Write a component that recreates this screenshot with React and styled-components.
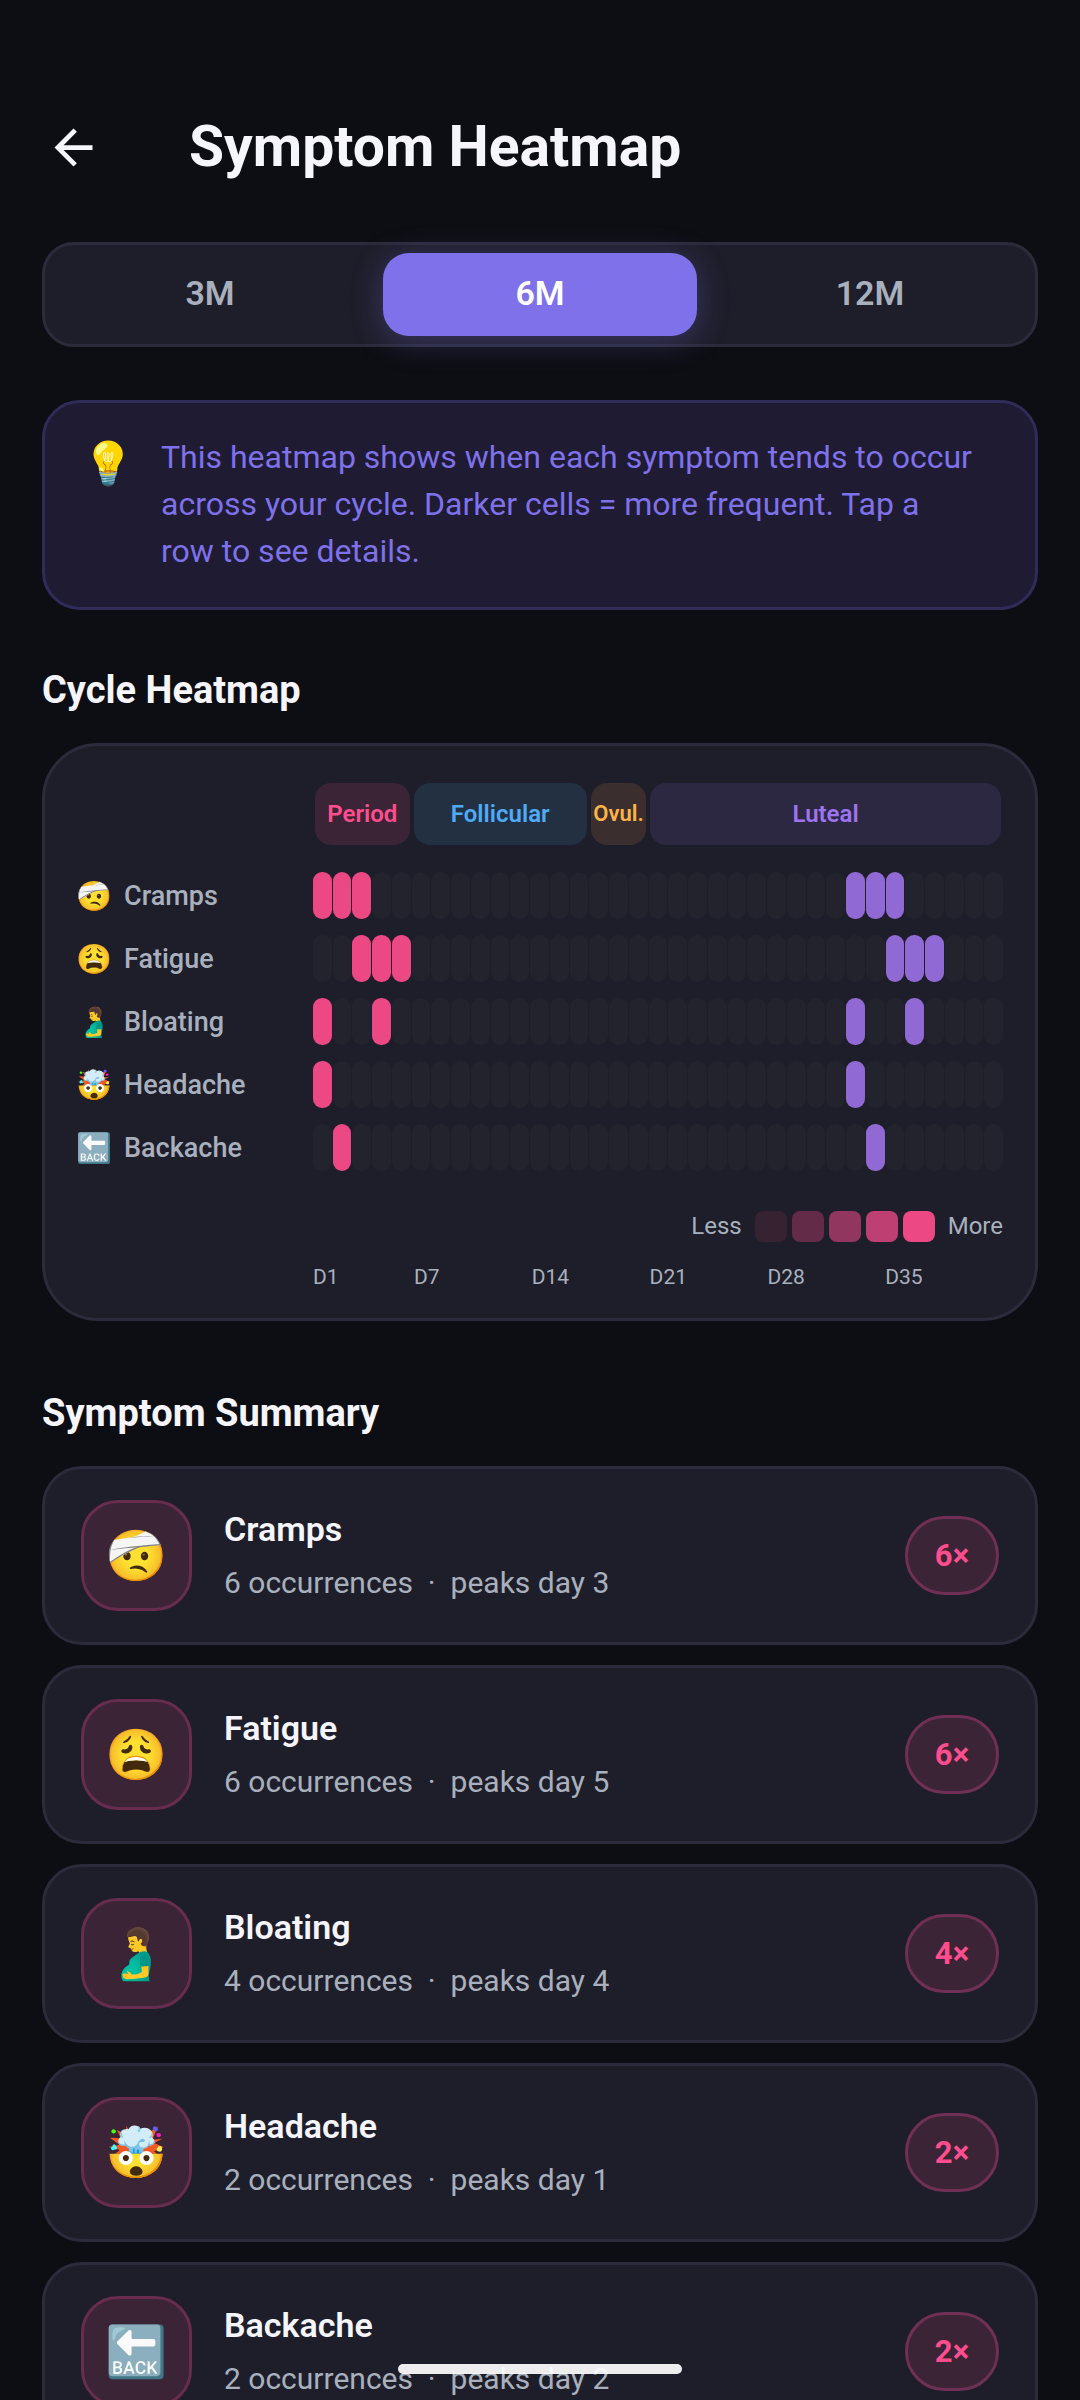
import React, { useState } from 'react';
import styled, { createGlobalStyle } from 'styled-components';

const COLORS = {
  background: '#0d0e13',
  surface: '#1e1e2a',
  outline: '#2b2b3b',
  text: '#f6f5fb',
  muted: '#a9b0bd',
  accent: '#7f71ea',
  period: '#ff4d8d',
  follicular: '#4dabf7',
  ovulation: '#ffb347',
  luteal: '#9d74f0',
};

const CYCLE_DAYS = 35;
const RANGES = ['3M', '6M', '12M'];

const PHASES = [
  { name: 'Period', days: 5, color: COLORS.period, fill: '#3a2436' },
  { name: 'Follicular', days: 9, color: COLORS.follicular, fill: '#233042' },
  {
    name: 'Ovul.',
    days: 3,
    color: COLORS.ovulation,
    fill: '#3a2f2e',
    compact: true,
  },
  { name: 'Luteal', days: 18, color: COLORS.luteal, fill: '#2d2842' },
];

const AXIS = [
  { label: 'D1', span: 6 },
  { label: 'D7', span: 7 },
  { label: 'D14', span: 7 },
  { label: 'D21', span: 7 },
  { label: 'D28', span: 7 },
  { label: 'D35', span: 7 },
];

const LEGEND = ['#362231', '#642b48', '#91365f', '#be3f72', '#ec4883'];

const SYMPTOMS = [
  { name: 'Cramps', emoji: '🤕', days: [1, 2, 3, 28, 29, 30], peak: 3 },
  { name: 'Fatigue', emoji: '😩', days: [3, 4, 5, 30, 31, 32], peak: 5 },
  { name: 'Bloating', emoji: '🫃', days: [1, 4, 28, 31], peak: 4 },
  { name: 'Headache', emoji: '🤯', days: [1, 28], peak: 1 },
  { name: 'Backache', emoji: '🔙', days: [2, 29], peak: 2 },
];

const GlobalStyle = createGlobalStyle`
  * {
    box-sizing: border-box;
  }
  body {
    margin: 0;
    background: ${COLORS.background};
    color: ${COLORS.text};
    font-family: Roboto, 'Noto Color Emoji', sans-serif;
  }
  button {
    font-family: inherit;
    border: 0;
    padding: 0;
    background: none;
    color: inherit;
    text-align: left;
    cursor: pointer;
  }
`;

const Screen = styled.main`
  height: 100vh;
  overflow-y: auto;
  scrollbar-width: none;
  padding: 95px 42px 0;
`;

const Header = styled.header`
  display: flex;
  align-items: center;
  gap: 84px;
  height: 105px;
`;

const BackButton = styled.button`
  display: flex;
  align-items: center;
  justify-content: center;
  width: 63px;
  height: 63px;
`;

const Title = styled.h1`
  margin: 0;
  padding-bottom: 2px;
  font-size: 57px;
  line-height: 70px;
  font-weight: 700;
`;

const Tabs = styled.div`
  display: grid;
  grid-template-columns: repeat(3, 1fr);
  gap: 16px;
  height: 105px;
  margin-top: 42px;
  padding: 8px;
  border: 3px solid ${COLORS.outline};
  border-radius: 32px;
  background: ${COLORS.surface};
`;

const Tab = styled.button`
  padding-bottom: 3px;
  border-radius: 26px;
  font-size: 34px;
  line-height: 40px;
  font-weight: 600;
  text-align: center;
  color: ${({ $active }) => ($active ? '#ffffff' : COLORS.muted)};
  background: ${({ $active }) => ($active ? COLORS.accent : 'transparent')};
  box-shadow: ${({ $active }) =>
    $active ? '0 5px 32px rgba(127, 113, 234, 0.3)' : 'none'};
`;

const Hint = styled.aside`
  display: flex;
  gap: 32px;
  margin-top: 53px;
  padding: 31px 37px 32px;
  border: 3px solid #312b5a;
  border-radius: 38px;
  background: #1e1b32;
  p {
    flex: 1;
    margin: 0;
    font-size: 32px;
    line-height: 47px;
    color: ${COLORS.accent};
  }
`;

const HintIcon = styled.span`
  width: 47px;
  font-size: 42px;
  line-height: 60px;
  text-align: center;
`;

const SectionTitle = styled.h2`
  margin: ${({ $top }) => $top}px 0 30px;
  font-size: 38px;
  line-height: 46px;
  font-weight: 700;
`;

const HeatmapCard = styled.section`
  padding: 37px 32px 28px;
  border: 3px solid ${COLORS.outline};
  border-radius: 56px;
  background: ${COLORS.surface};
`;

const PhaseBar = styled.div`
  display: grid;
  grid-template-columns: ${PHASES.map(({ days }) => `${days}fr`).join(' ')};
  margin: 0 0 27px 236px;
`;

const Phase = styled.div`
  display: flex;
  justify-content: center;
  min-width: 0;
  margin: 0 2px;
  border-radius: 16px;
  font-size: ${({ $compact }) => ($compact ? 22 : 24)}px;
  line-height: 62px;
  font-weight: 600;
  white-space: nowrap;
  color: ${({ $color }) => $color};
  background: ${({ $fill }) => $fill};
`;

const HeatRows = styled.div`
  display: grid;
  gap: 16px;
`;

const HeatRow = styled.button`
  display: grid;
  grid-template-columns: 236px 1fr;
  align-items: center;
  height: 47px;
`;

const RowLabel = styled.span`
  display: flex;
  align-items: center;
  gap: 13px;
  font-size: 27px;
  line-height: 32px;
  font-weight: 500;
  color: ${COLORS.muted};
`;

const RowEmoji = styled.span`
  display: flex;
  justify-content: center;
  width: 34px;
  font-size: 29px;
`;

const Cells = styled.span`
  display: grid;
  grid-template-columns: repeat(${CYCLE_DAYS}, 1fr);
  gap: 1px;
  height: 100%;
`;

const Cell = styled.span`
  border-radius: 9px;
  background: ${({ $color }) => $color};
`;

const Legend = styled.div`
  display: flex;
  justify-content: flex-end;
  align-items: center;
  gap: 5px;
  margin-top: 40px;
  font-size: 24px;
  line-height: 31px;
  color: ${COLORS.muted};
`;

const LegendText = styled.span`
  margin: ${({ $end }) => ($end ? '0 0 0 8px' : '0 8px 0 0')};
`;

const Swatch = styled.span`
  width: 32px;
  height: 31px;
  border-radius: 8px;
  background: ${({ $color }) => $color};
`;

const Axis = styled.div`
  display: flex;
  margin: 23px 0 0 236px;
  font-size: 21px;
  line-height: 25px;
  color: ${COLORS.muted};
`;

const AxisLabel = styled.span`
  flex: ${({ $span }) => $span} 1 0;
`;

const SummaryList = styled.ul`
  display: grid;
  gap: 20px;
  margin: 0;
  padding: 0 0 80px;
  list-style: none;
`;

const SummaryCard = styled.li`
  display: flex;
  align-items: center;
  gap: 32px;
  padding: 31px 36px;
  border: 3px solid ${COLORS.outline};
  border-radius: 40px;
  background: ${COLORS.surface};
`;

const SummaryIcon = styled.span`
  display: flex;
  align-items: center;
  justify-content: center;
  width: 111px;
  height: 111px;
  border: 3px solid #682c4e;
  border-radius: 37px;
  background: #3a2436;
  font-size: 50px;
  line-height: 56px;
`;

const SummaryText = styled.div`
  flex: 1;
  h3 {
    margin: 0 0 15px;
    font-size: 34px;
    line-height: 40px;
    font-weight: 600;
  }
  p {
    margin: 0;
    font-size: 30px;
    line-height: 38px;
    color: ${COLORS.muted};
    white-space: pre;
  }
`;

const Badge = styled.span`
  min-width: 94px;
  border: 3px solid #702f54;
  border-radius: 40px;
  background: #3a2436;
  font-size: 31px;
  line-height: 73px;
  font-weight: 700;
  text-align: center;
  color: ${COLORS.period};
`;

const HomeIndicator = styled.div`
  position: fixed;
  bottom: 26px;
  left: 50%;
  width: 284px;
  height: 10px;
  margin-left: -142px;
  border-radius: 5px;
  background: rgba(255, 255, 255, 0.92);
`;

const cellColor = (symptom, day) => {
  if (!symptom.days.includes(day)) return '#23232e';
  return day <= 5 ? '#ec4883' : '#9069d4';
};

const Heatmap = () => (
  <HeatmapCard>
    <PhaseBar>
      {PHASES.map(({ name, color, fill, compact }) => (
        <Phase key={name} $color={color} $fill={fill} $compact={compact}>
          {name}
        </Phase>
      ))}
    </PhaseBar>
    <HeatRows>
      {SYMPTOMS.map((symptom) => (
        <HeatRow key={symptom.name} type="button">
          <RowLabel>
            <RowEmoji>{symptom.emoji}</RowEmoji>
            {symptom.name}
          </RowLabel>
          <Cells>
            {Array.from({ length: CYCLE_DAYS }, (_, i) => (
              <Cell key={i} $color={cellColor(symptom, i + 1)} />
            ))}
          </Cells>
        </HeatRow>
      ))}
    </HeatRows>
    <Legend>
      <LegendText>Less</LegendText>
      {LEGEND.map((color) => (
        <Swatch key={color} $color={color} />
      ))}
      <LegendText $end>More</LegendText>
    </Legend>
    <Axis>
      {AXIS.map(({ label, span }) => (
        <AxisLabel key={label} $span={span}>
          {label}
        </AxisLabel>
      ))}
    </Axis>
  </HeatmapCard>
);

const App = () => {
  const [range, setRange] = useState('6M');

  return (
    <>
      <GlobalStyle />
      <Screen>
        <Header>
          <BackButton type="button" aria-label="Back">
            <svg width="57" height="57" viewBox="0 0 24 24" fill={COLORS.text}>
              <path d="M20 11H7.83l5.59-5.59L12 4l-8 8 8 8 1.41-1.41L7.83 13H20v-2z" />
            </svg>
          </BackButton>
          <Title>Symptom Heatmap</Title>
        </Header>

        <Tabs>
          {RANGES.map((item) => (
            <Tab
              key={item}
              type="button"
              aria-pressed={item === range}
              $active={item === range}
              onClick={() => setRange(item)}
            >
              {item}
            </Tab>
          ))}
        </Tabs>

        <Hint>
          <HintIcon>💡</HintIcon>
          <p>
            This heatmap shows when each symptom tends to occur across your
            cycle. Darker cells = more frequent. Tap a row&nbsp;to see details.
          </p>
        </Hint>

        <SectionTitle $top={57}>Cycle Heatmap</SectionTitle>
        <Heatmap />

        <SectionTitle $top={69}>Symptom Summary</SectionTitle>
        <SummaryList>
          {SYMPTOMS.map(({ name, emoji, days, peak }) => (
            <SummaryCard key={name}>
              <SummaryIcon>{emoji}</SummaryIcon>
              <SummaryText>
                <h3>{name}</h3>
                <p>{`${days.length} occurrences  ·  peaks day ${peak}`}</p>
              </SummaryText>
              <Badge>{days.length}×</Badge>
            </SummaryCard>
          ))}
        </SummaryList>
      </Screen>
      <HomeIndicator />
    </>
  );
};

export default App;
